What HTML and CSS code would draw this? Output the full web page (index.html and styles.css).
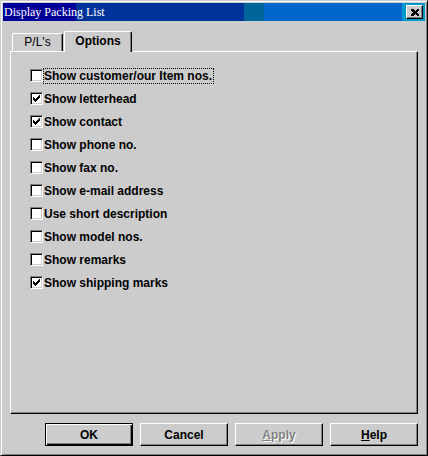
FILE: index.html
```html
<!DOCTYPE html>
<html lang="en">
<head>
  <meta charset="UTF-8" />
  <title>Display Packing List</title>
  <link rel="stylesheet" href="styles.css">
</head>
<body>
<div class="window">
  <div class="titlebar">
    <span class="title">Display Packing List</span>
    <span class="close-box">
      <button class="close-btn" aria-label="Close">
        <svg width="8" height="7" viewBox="0 0 8 7" shape-rendering="crispEdges">
          <path d="M0 0h2l2 2 2-2h2v1l-2 2.5 2 2.5v1h-2l-2-2-2 2h-2v-1l2-2.5-2-2.5z" fill="#000"/>
        </svg>
      </button>
    </span>
  </div>

  <div class="content">
    <div class="tabs">
      <div class="tab">P/L's</div>
      <div class="tab active">Options</div>
    </div>

    <div class="panel">
      <ul class="options">
        <li><span class="box"></span><span class="label focus">Show customer/our Item nos.</span></li>
        <li><span class="box checked"></span><span class="label">Show letterhead</span></li>
        <li><span class="box checked"></span><span class="label">Show contact</span></li>
        <li><span class="box"></span><span class="label">Show phone no.</span></li>
        <li><span class="box"></span><span class="label">Show fax no.</span></li>
        <li><span class="box"></span><span class="label">Show e-mail address</span></li>
        <li><span class="box"></span><span class="label">Use short description</span></li>
        <li><span class="box"></span><span class="label">Show model nos.</span></li>
        <li><span class="box"></span><span class="label">Show remarks</span></li>
        <li><span class="box checked"></span><span class="label">Show shipping marks</span></li>
      </ul>
    </div>

    <div class="buttons">
      <button class="btn default">OK</button>
      <button class="btn">Cancel</button>
      <button class="btn disabled"><u>A</u>pply</button>
      <button class="btn"><u>H</u>elp</button>
    </div>
  </div>
</div>
</body>
</html>
```

FILE: styles.css
```css
* {
    box-sizing: border-box;
}
body {
    margin: 0;
    background: #cccccc;
    font-family: "Liberation Sans", Arial, sans-serif;
    font-size: 12px;
}

.window {
    width: 428px;
    height: 456px;
    padding: 2px;
    display: flex;
    flex-direction: column;
    background: #cccccc;
    border: 1px solid;
    border-color: #cccccc #000000 #000000 #cccccc;
    box-shadow: inset 1px 1px #ffffff, inset -1px -1px #808080;
}

/* title bar with the blocky gradient */
.titlebar {
    height: 18px;
    display: flex;
    align-items: center;
    justify-content: space-between;
    background: linear-gradient(to right,
        #000099 0, #000099 73px,
        #003399 73px, #003399 241px,
        #006699 241px, #006699 261px,
        #0066cc 261px, #0066cc 399px,
        #0099cc 399px);
}
.title {
    padding-left: 1px;
    color: #ffffff;
    font-family: "Liberation Serif", "Times New Roman", serif;
    font-size: 12px;
    line-height: 18px;
}
.close-box {
    display: flex;
    padding-right: 2px;
}
.close-btn {
    width: 17px;
    height: 14px;
    padding: 0;
    display: flex;
    align-items: center;
    justify-content: center;
    background: #cccccc;
    border: 1px solid;
    border-color: #ffffff #000000 #000000 #ffffff;
    box-shadow: inset -1px -1px #808080;
}

.content {
    flex: 1;
    display: flex;
    flex-direction: column;
    padding: 10px 7px 0 7px;
}

/* tabs */
.tabs {
    display: flex;
    align-items: flex-end;
    gap: 1px;
    padding-left: 2px;
    height: 20px;
    position: relative;
    z-index: 1;
}
.tab {
    width: 51px;
    height: 18px;
    line-height: 16px;
    text-align: center;
    background: #cccccc;
    border: 1px solid;
    border-bottom: none;
    border-color: #ffffff #000000 #ffffff #ffffff;
    border-radius: 2px 2px 0 0;
    box-shadow: inset -1px 0 #808080;
    color: #000000;
}
.tab.active {
    width: 68px;
    height: 21px;
    margin-bottom: -1px;
    padding-top: 1px;
    font-weight: bold;
}

/* panel */
.panel {
    height: 363px;
    background: #cccccc;
    border: 1px solid;
    border-color: #ffffff #000000 #000000 #ffffff;
    box-shadow: inset -1px -1px #808080;
    padding: 12px 0 0 19px;
}
.options {
    list-style: none;
    margin: 0;
    padding: 0;
}
.options li {
    height: 23px;
    display: flex;
    align-items: center;
}
.box {
    width: 13px;
    height: 13px;
    flex: none;
    background: #ffffff;
    border: 1px solid;
    border-color: #808080 #ffffff #ffffff #808080;
    box-shadow: inset 1px 1px #000000, inset -1px -1px #cccccc;
    position: relative;
}
.box.checked::after {
    content: "";
    position: absolute;
    left: 2px;
    top: 2px;
    width: 7px;
    height: 7px;
    background: url("data:image/svg+xml,%3Csvg xmlns='http://www.w3.org/2000/svg' width='7' height='7' shape-rendering='crispEdges'%3E%3Cpath d='M6 0h1v3h-1v1h-1v1h-1v1h-1v1h-1v-1h-1v-1h-1v-3h1v1h1v1h1v-1h1v-1h1v-1h1z' fill='%23000'/%3E%3C/svg%3E") no-repeat;
}
.label {
    padding: 1px 1px 1px 0;
    border: 1px dotted transparent;
    font-weight: bold;
    line-height: 12px;
}
.label.focus {
    border-color: #000000;
}

/* buttons */
.buttons {
    display: flex;
    justify-content: flex-end;
    gap: 7px;
    margin-top: 9px;
}
.btn {
    width: 88px;
    height: 23px;
    padding: 0;
    background: #cccccc;
    font-family: "Liberation Sans", Arial, sans-serif;
    font-size: 12px;
    font-weight: bold;
    color: #000000;
    border: 1px solid;
    border-color: #ffffff #000000 #000000 #ffffff;
    box-shadow: inset -1px -1px #808080;
}
.btn.default {
    border-color: #000000;
    box-shadow: inset 1px 1px #ffffff, inset -1px -1px #000000, inset -2px -2px #808080;
}
.btn.disabled {
    color: #808080;
    text-shadow: 1px 1px #ffffff;
}
```
